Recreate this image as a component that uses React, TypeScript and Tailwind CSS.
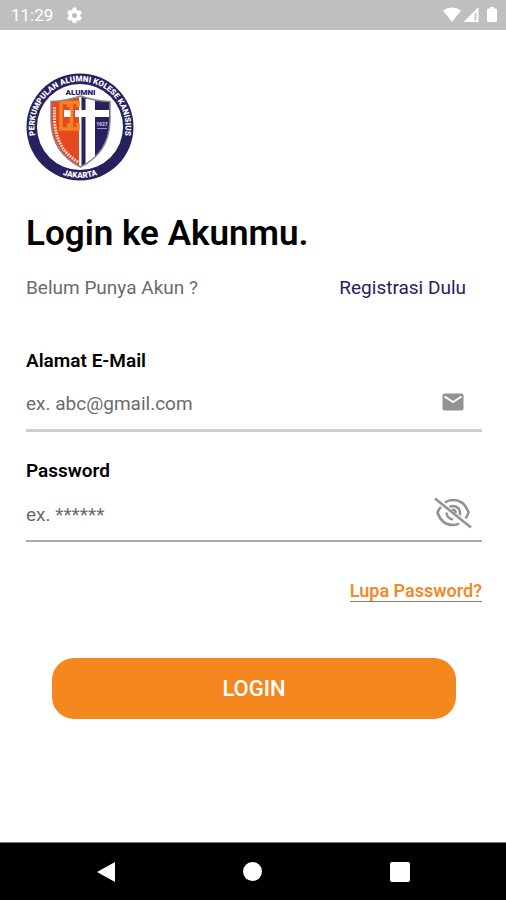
import React from "react";

function StatusBar() {
  return (
    <header className="flex h-[30px] items-center justify-between bg-[#bfbfbf] pl-[11px] pr-2 text-white">
      <div className="flex items-center gap-3">
        <span className="text-[17px] leading-5">11:29</span>
        <svg viewBox="0 0 24 24" className="size-[19px]" fill="currentColor" aria-hidden="true">
          <path d="M19.14 12.94c.04-.3.06-.61.06-.94s-.02-.64-.07-.94l2.03-1.58a.49.49 0 0 0 .12-.61l-1.92-3.32a.49.49 0 0 0-.59-.22l-2.39.96a7 7 0 0 0-1.62-.94l-.36-2.54A.48.48 0 0 0 13.92 2h-3.84a.48.48 0 0 0-.47.41l-.36 2.54c-.59.24-1.13.57-1.62.94l-2.39-.96a.48.48 0 0 0-.59.22L2.74 8.87a.47.47 0 0 0 .12.61l2.03 1.58a6 6 0 0 0 0 1.88l-2.03 1.58a.49.49 0 0 0-.12.61l1.92 3.32c.12.22.37.29.59.22l2.39-.96c.5.38 1.03.7 1.62.94l.36 2.54c.05.24.24.41.48.41h3.84c.24 0 .44-.17.47-.41l.36-2.54a7 7 0 0 0 1.62-.94l2.39.96c.22.08.47 0 .59-.22l1.92-3.32a.47.47 0 0 0-.12-.61zM12 15.2a3.2 3.2 0 1 1 0-6.4 3.2 3.2 0 0 1 0 6.4z" />
        </svg>
      </div>
      <svg viewBox="0 0 56 18" className="h-[18px] w-14" fill="white" aria-hidden="true">
        <path d="M1 4.500Q10 -1.500 19 4.500L10 16Z" />
        <path d="M36.500 1V16H21.500Z" />
        <path d="M33.500 7V14.500" stroke="#bfbfbf" strokeWidth="1.600" />
        <path d="M46 2.500h2V1h4v1.500h2q1 0 1 1V15q0 1-1 1h-8q-1 0-1-1V3.500q0-1 1-1Z" />
      </svg>
    </header>
  );
}

function Logo() {
  return (
    <svg
      viewBox="0 0 108 108"
      className="size-[108px]"
      role="img"
      aria-label="Perkumpulan Alumni Kolese Kanisius Jakarta"
      fontFamily="Roboto, sans-serif"
    >
      <defs>
        <path id="ring-top" d="M14.600 76.750A45.500 45.500 0 1 1 93.400 76.750" />
        <path id="ring-bottom" d="M19 91A51 51 0 0 0 89 91" />
        <clipPath id="shield">
          <path d="M25 28.500Q41 28 54.500 23Q68 28 84 28.500V48Q83 80 54.500 94Q26 80 25 48Z" />
        </clipPath>
      </defs>
      <circle cx="54" cy="54" r="53.500" fill="#27215f" />
      <circle cx="54" cy="54" r="43" fill="white" />
      <text fill="white" fontSize="8" fontWeight="900">
        <textPath href="#ring-top" startOffset="50%" textAnchor="middle">
          PERKUMPULAN ALUMNI KOLESE KANISIUS
        </textPath>
      </text>
      <text fill="white" fontSize="8" fontWeight="900">
        <textPath href="#ring-bottom" startOffset="50%" textAnchor="middle">
          JAKARTA
        </textPath>
      </text>
      <text x="54.500" y="22" textAnchor="middle" fontSize="8" fontWeight="900" fill="#27215f">
        ALUMNI
      </text>
      <g clipPath="url(#shield)">
        <rect x="24" y="20" width="31" height="76" fill="#e8481f" />
        <rect x="55" y="20" width="31" height="76" fill="#27215f" />
        <path d="M53 20h2.500v76H53z" fill="white" />
        <path
          d="M42.500 34V29.500H35V56H42.500V50M52 34V29.500H45.500V56H52V50"
          fill="none"
          stroke="#f58220"
          strokeWidth="3.500"
        />
        <path d="M38 37h6.500v7H38z" fill="white" />
        <path d="M59.500 26h9.500v11h14v7H69v52h-9.500V44H49v-7h10.500z" fill="white" />
        <path
          d="M28.500 34V48Q30 76 52 89"
          fill="none"
          stroke="#ffd9ca"
          strokeWidth="3"
          strokeDasharray="1.800 1"
        />
        <text x="76" y="53" textAnchor="middle" fontSize="5" fontWeight="700" fill="#d7d7ea">
          1927
        </text>
        <path d="M71 55.500h10" stroke="#9a98bd" />
      </g>
      <path
        d="M25 28.500Q41 28 54.500 23Q68 28 84 28.500V48Q83 80 54.500 94Q26 80 25 48Z"
        fill="none"
        stroke="#8d8790"
        strokeWidth="1.500"
      />
    </svg>
  );
}

function MailIcon() {
  return (
    <svg viewBox="0 0 22 18" className="h-[18px] w-[22px]" aria-hidden="true">
      <rect x="0.500" y="0.500" width="21" height="17" rx="2" fill="#929292" />
      <path d="M2.500 3.500L11 9L19.500 3.500" fill="none" stroke="white" strokeWidth="2" />
    </svg>
  );
}

function EyeOffIcon() {
  return (
    <svg viewBox="0 0 38 32" className="h-8 w-[38px]" fill="none" stroke="#929292" strokeWidth="2.500" aria-hidden="true">
      <path d="M11 5.500Q14.500 3 19 3C27 3 32 8 34.500 15.500Q33.500 19 31.500 21.500" />
      <path d="M7 10Q4.500 12.500 3.500 15.500C6 23 11 28 19 28Q22.500 28 25 26.500" />
      <path d="M15.500 10Q20 7.500 24 11Q27 14 25.500 18" />
      <path d="M12.500 15.500Q13 21.500 19 22.500" />
      <path d="M18 13Q21 12 22 16" />
      <path d="M1 1.500L37 30.500" />
    </svg>
  );
}

function NavigationBar() {
  return (
    <nav aria-label="System" className="flex h-[58px] items-center justify-around border-t border-[#777] bg-black px-8">
      <button type="button" aria-label="Back" className="flex size-10 items-center justify-center">
        <svg viewBox="0 0 20 22" className="h-[22px] w-5" fill="white">
          <path d="M19 1V21L1 11Z" />
        </svg>
      </button>
      <button type="button" aria-label="Home" className="flex size-10 items-center justify-center">
        <span className="size-[19px] rounded-full bg-white" />
      </button>
      <button type="button" aria-label="Recent apps" className="flex size-10 items-center justify-center">
        <span className="size-5 rounded-[2px] bg-white" />
      </button>
    </nav>
  );
}

export default function App() {
  return (
    <div className="flex min-h-screen flex-col bg-white font-[Roboto,sans-serif] text-black">
      <StatusBar />
      <main className="flex-1 pl-[26px] pr-6 pt-[43px]">
        <Logo />
        <h1 className="mt-[33px] text-[35px] font-semibold leading-10">Login ke Akunmu.</h1>
        <div className="mt-[22px] flex items-center justify-between pr-4 text-[19px] leading-6">
          <span className="text-[#6b6b6b]">Belum Punya Akun ?</span>
          <a href="#registrasi" className="text-[#27215f]">Registrasi Dulu</a>
        </div>
        <form className="mt-[49px]" onSubmit={(event) => event.preventDefault()}>
          <label htmlFor="email" className="block text-[19px] font-semibold leading-6">Alamat E-Mail</label>
          <div className="mt-1.5 flex h-[53px] items-center border-b-[3px] border-[#cecece]">
            <input
              id="email"
              type="email"
              placeholder="ex. abc@gmail.com"
              className="min-w-0 flex-1 text-[19px] leading-6 outline-none placeholder:text-[#6b6b6b]"
            />
            <span className="flex w-[58px] justify-center pb-1"><MailIcon /></span>
          </div>
          <label htmlFor="password" className="mt-[27px] block text-[19px] font-semibold leading-6">Password</label>
          <div className="mt-1.5 flex h-[53px] items-center border-b-2 border-[#a8a8a8]">
            <input
              id="password"
              type="password"
              placeholder="ex. ******"
              className="min-w-0 flex-1 text-[19px] leading-6 outline-none placeholder:text-[#6b6b6b]"
            />
            <button type="button" aria-label="Tampilkan password" className="flex w-[58px] justify-center pb-1">
              <EyeOffIcon />
            </button>
          </div>
          <div className="mt-[39px] flex justify-end">
            <a href="#lupa-password" className="border-b border-[#a07860] text-[18px] font-semibold leading-5 text-[#f08a2c]">
              Lupa Password?
            </a>
          </div>
          <button
            type="submit"
            className="mx-[26px] mt-14 flex h-[61px] w-[calc(100%-52px)] items-center justify-center rounded-[22px] bg-[#f4881f] text-[22px] font-medium text-white"
          >
            LOGIN
          </button>
        </form>
      </main>
      <NavigationBar />
    </div>
  );
}
